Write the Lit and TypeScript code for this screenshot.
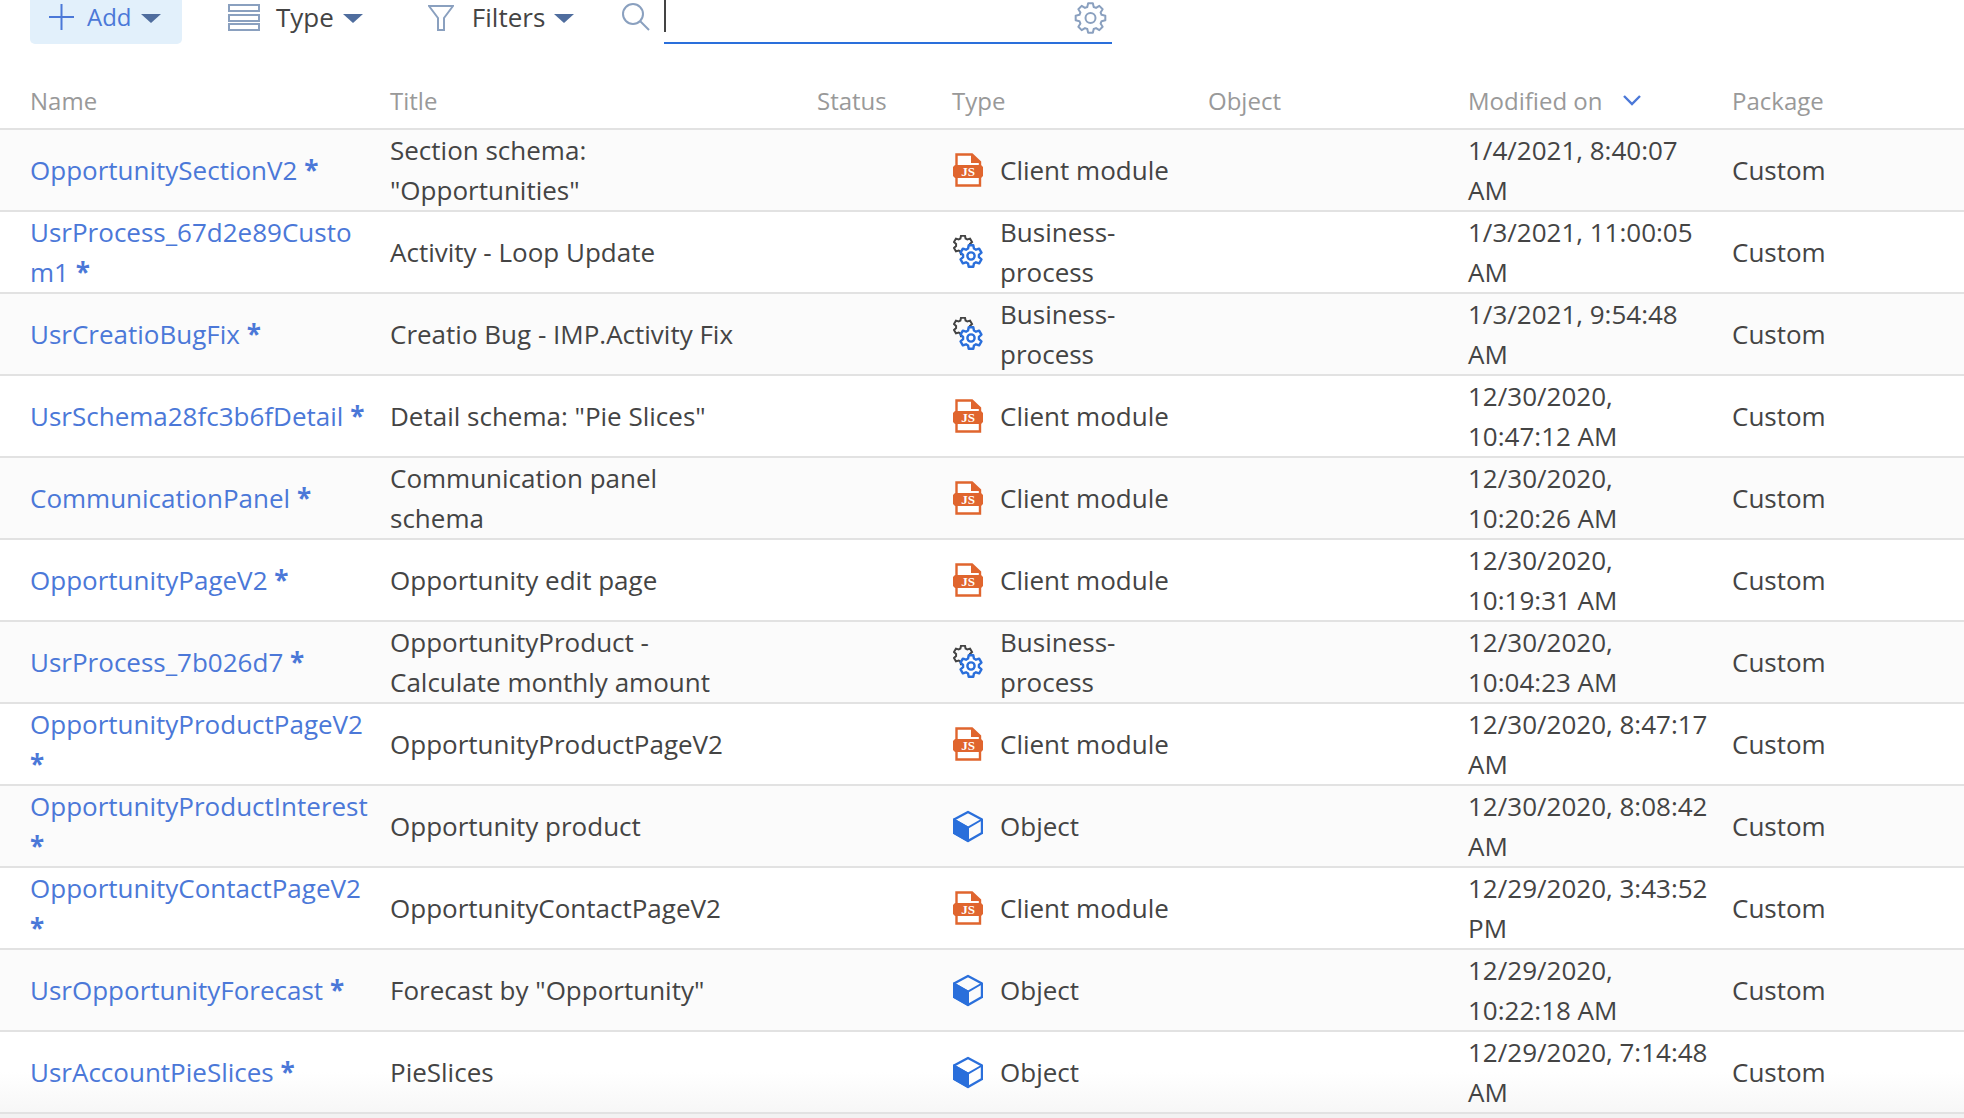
import { html, svg, LitElement, css } from 'lit';
import { customElement } from 'lit/decorators.js';

type Kind = 'client' | 'process' | 'object';

const ROWS: { name: string; title: string; kind: Kind; modified: string }[] = [
  { name: 'OpportunitySectionV2', title: 'Section schema: "Opportunities"', kind: 'client', modified: '1/4/2021, 8:40:07 AM' },
  { name: 'UsrProcess_67d2e89Custom1', title: 'Activity - Loop Update', kind: 'process', modified: '1/3/2021, 11:00:05 AM' },
  { name: 'UsrCreatioBugFix', title: 'Creatio Bug - IMP.Activity Fix', kind: 'process', modified: '1/3/2021, 9:54:48 AM' },
  { name: 'UsrSchema28fc3b6fDetail', title: 'Detail schema: "Pie Slices"', kind: 'client', modified: '12/30/2020, 10:47:12 AM' },
  { name: 'CommunicationPanel', title: 'Communication panel schema', kind: 'client', modified: '12/30/2020, 10:20:26 AM' },
  { name: 'OpportunityPageV2', title: 'Opportunity edit page', kind: 'client', modified: '12/30/2020, 10:19:31 AM' },
  { name: 'UsrProcess_7b026d7', title: 'OpportunityProduct - Calculate monthly amount', kind: 'process', modified: '12/30/2020, 10:04:23 AM' },
  { name: 'OpportunityProductPageV2', title: 'OpportunityProductPageV2', kind: 'client', modified: '12/30/2020, 8:47:17 AM' },
  { name: 'OpportunityProductInterest', title: 'Opportunity product', kind: 'object', modified: '12/30/2020, 8:08:42 AM' },
  { name: 'OpportunityContactPageV2', title: 'OpportunityContactPageV2', kind: 'client', modified: '12/29/2020, 3:43:52 PM' },
  { name: 'UsrOpportunityForecast', title: 'Forecast by "Opportunity"', kind: 'object', modified: '12/29/2020, 10:22:18 AM' },
  { name: 'UsrAccountPieSlices', title: 'PieSlices', kind: 'object', modified: '12/29/2020, 7:14:48 AM' },
];

const KIND_LABEL: Record<Kind, string> = {
  client: 'Client module',
  process: 'Business-process',
  object: 'Object',
};

// toothed outline for the gear icons
function gearPath(cx: number, cy: number, outer: number, inner: number, teeth: number) {
  const pts: string[] = [];
  const step = (Math.PI * 2) / teeth;
  for (let i = 0; i < teeth; i++) {
    const a = i * step - Math.PI / 2;
    const at = (r: number, o: number) =>
      `${(cx + r * Math.cos(a + o * step)).toFixed(2)} ${(cy + r * Math.sin(a + o * step)).toFixed(2)}`;
    pts.push(at(inner, -0.36), at(outer, -0.2), at(outer, 0.2), at(inner, 0.36));
  }
  return `M${pts.join('L')}Z`;
}

const caret = html`<svg class="caret" width="20" height="9" viewBox="0 0 20 9"><path d="M0 0h20L10 9z" fill="#4f6d9e" /></svg>`;

function typeIcon(kind: Kind) {
  if (kind === 'client') {
    return html`<svg class="type-icon" width="30" height="34" viewBox="0 0 30 34">
      <path d="M3.500 13V1.500H19L27 9v4M3.500 24v8.500H27V24" fill="#fff" stroke="#e0652e" stroke-width="2.400" />
      <path d="M18 1.500V10h9z" fill="#e0652e" />
      <path d="M2 12h26l2 2v9l-2 2H2l-2-2v-9z" fill="#e0652e" />
      <text x="15" y="23" text-anchor="middle" class="js">JS</text>
    </svg>`;
  }
  if (kind === 'process') {
    return html`<svg class="type-icon" width="30" height="34" viewBox="0 0 30 34">
      ${svg`<path d="${gearPath(10, 10, 9.500, 7, 6)}" fill="none" stroke="#444" stroke-width="2" />`}
      ${svg`<path d="${gearPath(18, 21, 11, 8, 6)}" fill="#fff" stroke="#2a6fdb" stroke-width="2.400" stroke-linejoin="round" />`}
      <circle cx="18" cy="21" r="3.600" fill="none" stroke="#2a6fdb" stroke-width="2.400" />
    </svg>`;
  }
  return html`<svg class="type-icon" width="30" height="34" viewBox="0 0 30 34">
    <path d="M1 10.500L15 18.500V32L1 24z" fill="#2a6fdb" stroke="#2a6fdb" stroke-width="2" stroke-linejoin="round" />
    <path d="M15 3L29 10.500V24L15 32 1 24V10.500z" fill="none" stroke="#2a6fdb" stroke-width="2.400" stroke-linejoin="round" />
    <path d="M1 10.500L15 18.500 29 10.500M15 18.500V32" fill="none" stroke="#2a6fdb" stroke-width="2" />
  </svg>`;
}

@customElement('app-root')
export default class AppRoot extends LitElement {
  static styles = css`
    :host {
      display: flex;
      flex-direction: column;
      height: 1118px;
      overflow: hidden;
      background: #fff;
      font-family: 'Open Sans', 'Noto Sans', sans-serif;
      font-size: 26px;
      line-height: 40px;
      color: #444;
    }
    .toolbar {
      display: flex;
      align-items: flex-start;
      height: 44px;
      padding-left: 30px;
      flex: none;
    }
    .tool {
      display: flex;
      align-items: center;
      height: 34px;
    }
    .tool .caret {
      margin-left: 9px;
      margin-top: 2px;
    }
    .add {
      width: 152px;
      height: 44px;
      box-sizing: border-box;
      padding: 0 0 10px 19px;
      background: #e2f0fb;
      border-radius: 0 0 5px 5px;
      color: #4b78d8;
      font-size: 24px;
    }
    .add svg:first-child {
      margin-right: 13px;
    }
    .type-tool {
      margin-left: 46px;
    }
    .type-tool svg:first-child {
      margin-right: 16px;
    }
    .filters-tool {
      margin-left: 65px;
    }
    .filters-tool svg:first-child {
      margin-right: 18px;
    }
    .search-icon {
      margin-left: 48px;
      margin-top: 3px;
    }
    .search {
      margin-left: 14px;
      width: 448px;
      height: 44px;
      box-sizing: border-box;
      border-bottom: 2px solid #2a6fdb;
      display: flex;
      justify-content: space-between;
      padding: 2px 5px 0 0;
    }
    .cursor {
      width: 2px;
      height: 32px;
      margin-top: -2px;
      background: #444;
    }
    .head,
    .row {
      display: grid;
      grid-template-columns: 360px 427px 135px 256px 260px 264px 1fr;
      padding-left: 30px;
      border-bottom: 2px solid #e2e2e2;
      flex: none;
    }
    .head {
      height: 86px;
      box-sizing: border-box;
      align-items: start;
      color: #999;
      font-size: 24px;
      padding-top: 37px;
    }
    .sort {
      margin-left: 21px;
      vertical-align: 4px;
    }
    .row {
      height: 82px;
      box-sizing: border-box;
      align-items: center;
      background: #fff;
    }
    .row:nth-child(even) {
      background: #fbfbfb;
    }
    .row:last-child {
      background: linear-gradient(#fff 50%, #f7f7f7);
    }
    .name {
      padding-right: 20px;
      color: #4b78d8;
      overflow-wrap: anywhere;
    }
    .star {
      font-weight: 700;
    }
    .title {
      padding-right: 80px;
    }
    .type {
      display: flex;
      align-items: center;
      grid-column: 4;
      padding-right: 20px;
    }
    .type-icon {
      flex: none;
      margin-left: 1px;
      margin-right: 17px;
    }
    .js {
      font-family: 'Liberation Serif', serif;
      font-size: 13px;
      font-weight: 700;
      fill: #fff;
    }
    .modified {
      grid-column: 6;
      padding-right: 20px;
    }
    .rest {
      flex: 1;
      background: #f2f2f2;
    }
  `;

  render() {
    return html`
      <div class="toolbar">
        <div class="tool add">
          <svg width="25" height="26" viewBox="0 0 25 26"><path d="M12.500 0v26M0 13h25" stroke="#4b78d8" stroke-width="2" /></svg>
          Add${caret}
        </div>
        <div class="tool type-tool">
          <svg width="32" height="28" viewBox="0 0 32 28" fill="none" stroke="#8aa0bf" stroke-width="2">
            <rect x="1" y="2" width="30" height="6" /><rect x="1" y="12" width="30" height="6" /><rect x="1" y="21" width="30" height="6" />
          </svg>
          Type${caret}
        </div>
        <div class="tool filters-tool">
          <svg width="26" height="28" viewBox="0 0 26 28" fill="none" stroke="#8aa0bf" stroke-width="2">
            <path d="M1 3h24L16 15v12h-6V15z" />
          </svg>
          Filters${caret}
        </div>
        <svg class="search-icon" width="28" height="28" viewBox="0 0 28 28" fill="none" stroke="#8aa0bf" stroke-width="2">
          <circle cx="11" cy="11" r="10" /><path d="M18 18l9 9" />
        </svg>
        <div class="search">
          <div class="cursor"></div>
          <svg width="33" height="32" viewBox="0 0 33 32" fill="none" stroke="#8aa0bf" stroke-width="2">
            ${svg`<path d="${gearPath(16.5, 16, 15, 11.5, 8)}" stroke-linejoin="round" />`}
            <circle cx="16.500" cy="16" r="5" />
          </svg>
        </div>
      </div>
      <div class="table">
        <div class="head">
          <div>Name</div>
          <div>Title</div>
          <div>Status</div>
          <div>Type</div>
          <div>Object</div>
          <div>
            Modified on<svg class="sort" width="18" height="11" viewBox="0 0 18 11" fill="none" stroke="#4b78d8" stroke-width="2.400"><path d="M1 1l8 8 8-8" /></svg>
          </div>
          <div>Package</div>
        </div>
        ${ROWS.map(
          (r) => html`
            <div class="row">
              <div class="name">${r.name} <span class="star">*</span></div>
              <div class="title">${r.title}</div>
              <div class="type">${typeIcon(r.kind)}<span>${KIND_LABEL[r.kind]}</span></div>
              <div class="modified">${r.modified}</div>
              <div>Custom</div>
            </div>
          `
        )}
      </div>
      <div class="rest"></div>
    `;
  }
}
